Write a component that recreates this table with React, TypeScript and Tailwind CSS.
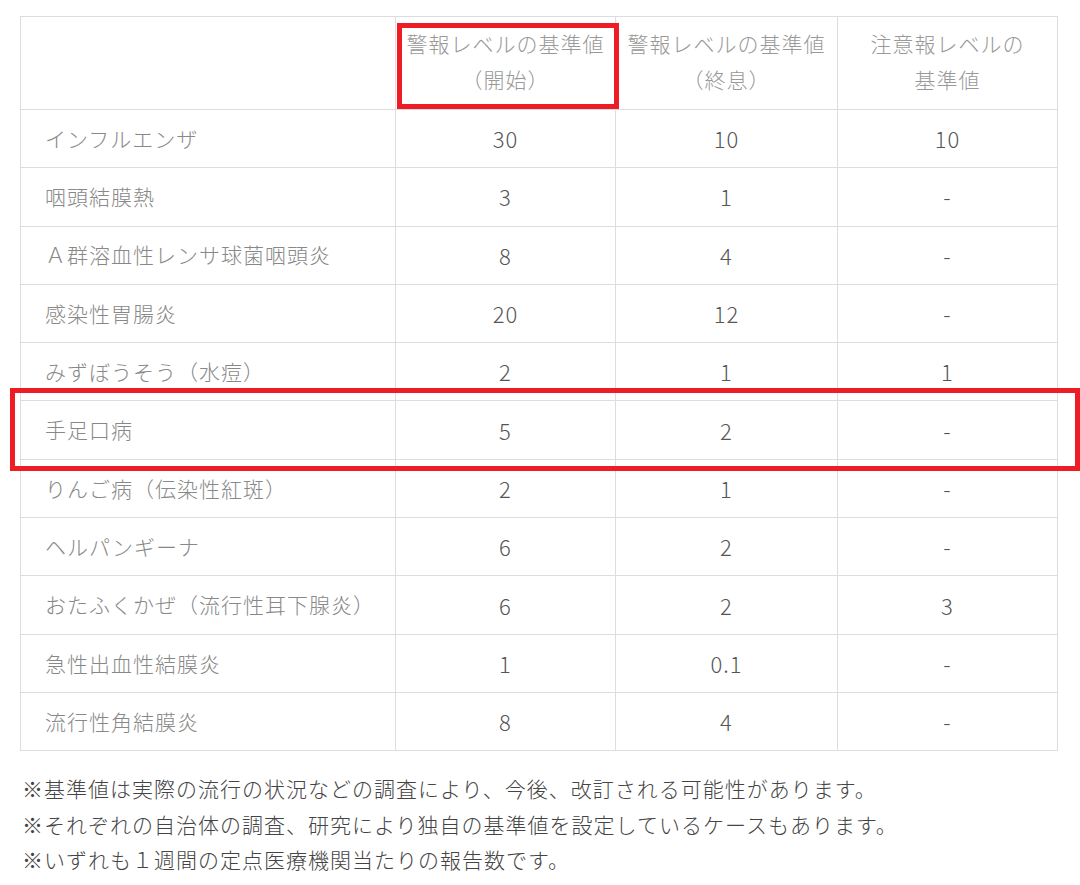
import React from "react";

const rows: [string, string, string, string][] = [
  ["インフルエンザ", "30", "10", "10"],
  ["咽頭結膜熱", "3", "1", "-"],
  ["Ａ群溶血性レンサ球菌咽頭炎", "8", "4", "-"],
  ["感染性胃腸炎", "20", "12", "-"],
  ["みずぼうそう（水痘）", "2", "1", "1"],
  ["手足口病", "5", "2", "-"],
  ["りんご病（伝染性紅斑）", "2", "1", "-"],
  ["ヘルパンギーナ", "6", "2", "-"],
  ["おたふくかぜ（流行性耳下腺炎）", "6", "2", "3"],
  ["急性出血性結膜炎", "1", "0.1", "-"],
  ["流行性角結膜炎", "8", "4", "-"],
];

const font = { fontFamily: '"Noto Sans CJK JP", "Noto Sans", sans-serif' };

export default function App() {
  return (
    <div className="relative w-[1080px] h-[885px] bg-white overflow-hidden font-light" style={font}>
      <div className="pt-[16px] pl-[20px]">
        <table className="table-fixed border-collapse w-[1037px] text-[21px] tracking-[1px]">
          <colgroup>
            <col className="w-[375px]" />
            <col className="w-[220px]" />
            <col className="w-[222px]" />
            <col className="w-[220px]" />
          </colgroup>
          <thead>
            <tr className="h-[93px] text-[#999] leading-[36px]">
              <th className="border border-[#ddd] font-light"></th>
              <th className="border border-[#ddd] font-light text-center pb-[4px]">
                警報レベルの基準値
                <br />
                （開始）
              </th>
              <th className="border border-[#ddd] font-light text-center pb-[4px]">
                警報レベルの基準値
                <br />
                （終息）
              </th>
              <th className="border border-[#ddd] font-light text-center pb-[4px]">
                注意報レベルの
                <br />
                基準値
              </th>
            </tr>
          </thead>
          <tbody>
            {rows.map((r, i) => (
              <tr key={i} className="h-[58.3px]">
                <td className="border border-[#ddd] pl-[24px] text-[#888]">{r[0]}</td>
                <td className="border border-[#ddd] text-center text-[#555] text-[22px]">{r[1]}</td>
                <td className="border border-[#ddd] text-center text-[#555] text-[22px]">{r[2]}</td>
                <td className="border border-[#ddd] text-center text-[#555] text-[22px]">{r[3]}</td>
              </tr>
            ))}
          </tbody>
        </table>
      </div>

      {/* footnotes */}
      <div className="mt-[20px] pl-[22px] text-[21px] tracking-[1px] leading-[35.5px] text-[#444]">
        <p>※基準値は実際の流行の状況などの調査により、今後、改訂される可能性があります。</p>
        <p>※それぞれの自治体の調査、研究により独自の基準値を設定しているケースもあります。</p>
        <p>※いずれも１週間の定点医療機関当たりの報告数です。</p>
      </div>

      {/* red highlight boxes */}
      <div className="absolute left-[397px] top-[23px] w-[222px] h-[86px] border-[5px] border-[#ee1c25]" />
      <div className="absolute left-[10px] top-[388px] w-[1070px] h-[83px] border-[5px] border-[#ee1c25]" />
    </div>
  );
}
